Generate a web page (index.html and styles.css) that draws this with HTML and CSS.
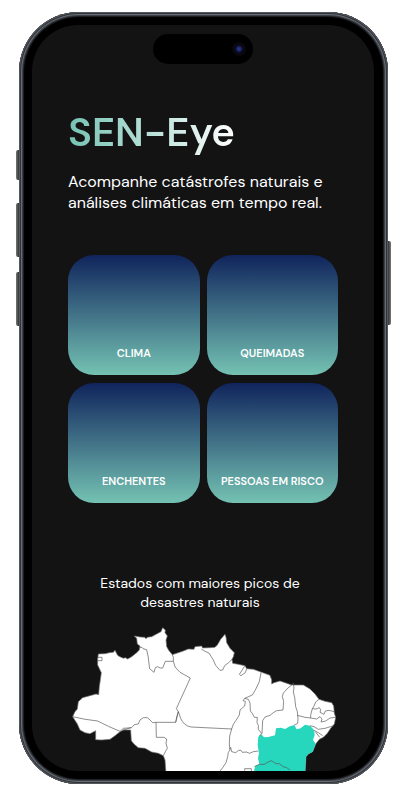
FILE: index.html
```html
<!DOCTYPE html>
<html lang="pt-BR">
<head>
<meta charset="utf-8">
<meta name="viewport" content="width=device-width, initial-scale=1">
<title>SEN-Eye</title>
<link rel="stylesheet" href="styles.css">
</head>
<body>
<div class="phone">
  <span class="key key-action"></span>
  <span class="key key-up"></span>
  <span class="key key-down"></span>
  <span class="key key-power"></span>
  <div class="screen">
    <div class="island"><span class="camera"></span></div>
    <main class="content">
      <h1 class="title">SEN-Eye</h1>
      <p class="lead">Acompanhe catástrofes naturais e<br>análises climáticas em tempo real.</p>
      <nav class="tiles">
        <a class="tile" href="#clima">CLIMA</a>
        <a class="tile" href="#queimadas">QUEIMADAS</a>
        <a class="tile" href="#enchentes">ENCHENTES</a>
        <a class="tile" href="#risco">PESSOAS EM RISCO</a>
      </nav>
      <h2 class="caption">Estados com maiores picos de<br>desastres naturais</h2>
      <svg class="map" viewBox="24 15 810 438" role="img" aria-label="Mapa do Brasil">
        <path class="land" d="M38 290L45 275 52 267 55 245 68 233 90 227 108 222 116 224 118 200 121 180 124 158 113 135 113 118 115 102 135 101 148 98 160 97 165 91 171 103 175 108 190 115 196 113 203 117 215 110 230 98 238 90 240 78 232 72 230 55 223 48 240 51 254 52 258 56 262 52 275 50 290 42 303 35 308 23 316 30 315 38 322 48 318 60 320 80 327 92 337 104 350 100 370 93 385 87 402 88 405 80 425 78 428 84 450 83 465 82 472 75 482 58 495 43 498 52 500 68 510 85 523 98 520 110 516 118 518 130 530 132 555 137 560 146 580 148 605 157 630 166 635 180 635 192 642 188 660 183 675 188 695 195 730 195 750 207 765 222 777 238 795 244 815 248 821 258 823 280 827 292 823 312 812 325 802 340 790 352 778 358 767 372 758 395 745 402 738 410 735 460 318 460 315 420 310 407 295 400 275 396 255 385 235 383 222 372 214 362 212 330 190 330 180 335 165 347 150 358 125 360 107 359 107 332 90 341 75 338 60 330 52 312Z"/>
        <path class="hot" d="M595 350L604 343 612 352 625 351 645 346 648 325 662 323 675 327 690 319 703 315 710 328 722 325 735 314 750 317 762 330 764 345 759 360 767 372 758 395 745 402 738 410 735 460 580 460 586 438 598 433 594 415 597 400 593 375Z"/>
        <g class="borders">
          <path d="M38 290Q74 299 113 303Q145 320 180 334L190 325 215 323 223 314 235 312 240 300 250 293 262 293 270 300 278 308 288 307H347L351 288 355 275 349 266 391 174 360 157Q341 142 340 124V112L337 104"/>
          <path d="M113 112H126V122H113M236 82H246L249 86 260 89Q266 112 267 132L269 146 282 157 286 143 293 140 300 144 308 144 316 124H340"/>
          <path d="M288 307L289 352H312L320 357 318 370 322 385 316 395 310 407M190 330L213 323M355 275L362 295Q371 317 393 321L516 327M347 307L355 275"/>
          <path d="M424 87L435 94 447 99 460 120 467 136 480 151 488 150 494 137 506 128 516 118M555 137L546 151 538 163 543 167 556 158 560 146"/>
          <path d="M603 158L598 185 586 210 577 225 554 235 549 242 556 244 554 258 540 270 538 285 528 301 520 313 515 327 509 348 508 372 510 390 505 397 503 410 498 428 488 443 480 453M554 235L565 238 570 249 571 273 577 280 583 292 592 292 591 308 595 316 595 328 605 341"/>
          <path d="M508 388L512 382 515 395 527 398 536 391 543 391 547 397 559 396 569 400 580 395 595 393M635 177L630 166M695 195L684 204 670 219 667 230 671 244 669 270 650 272 640 278 630 286 615 291 608 302 606 340 598 348M695 195L700 189 702 204 700 216 704 232 707 260 712 275 714 296 713 310 703 315"/>
          <path d="M777 238L767 246 762 258 757 266 752 285 752 294M757 266L768 267 778 263 782 269 780 277 792 283 796 273 807 271 823 275M712 286L735 292 752 294 770 297 780 290 786 297 783 306 797 303 810 294 827 292M750 317L762 320 775 328 795 325 818 318M762 331L775 338 788 347M766 335L779 352"/>
          <path d="M583 440L598 433 613 433 623 427 634 422 648 431 658 431 669 440 680 443 690 450M554 452V446H574V453"/>
        </g>
      </svg>
    </main>
  </div>
</div>
</body>
</html>
```
FILE: styles.css
```css
* {
  box-sizing: border-box;
}

body {
  margin: 0;
  height: 100vh;
  padding: 12px 12px 16px 19px;
  background: #fff;
  color: #fff;
  font-family: "DM Sans", Inter, "Liberation Sans", sans-serif;
}

.phone {
  position: relative;
  height: 100%;
  padding: 13px 14px 13px 13px;
  border-radius: 60px;
  background: #000;
  box-shadow:
    inset 0 0 0 1px #55585c,
    inset 0 0 0 2px #30343a,
    inset 0 0 0 3px #666b74,
    inset 0 0 0 4px #3c4046,
    inset 0 0 1px 5px #202226;
}

.key {
  position: absolute;
  left: -3px;
  width: 3px;
  border-radius: 2px 0 0 2px;
  background: linear-gradient(90deg, #777, #333);
}

.key-action {
  top: 138px;
  height: 30px;
}

.key-up {
  top: 191px;
  height: 54px;
}

.key-down {
  top: 260px;
  height: 54px;
}

.key-power {
  top: 229px;
  right: -3px;
  left: auto;
  height: 84px;
  border-radius: 0 2px 2px 0;
  background: linear-gradient(90deg, #333, #777);
}

.screen {
  height: 100%;
  padding: 9px 36px 0;
  overflow: hidden;
  border-radius: 46px;
  background: #131313;
}

.island {
  display: flex;
  align-items: center;
  justify-content: flex-end;
  width: 100px;
  height: 30px;
  margin: 0 auto;
  padding-right: 7px;
  border-radius: 15px;
  background: #000;
}

.camera {
  width: 14px;
  height: 14px;
  border-radius: 50%;
  background: radial-gradient(circle, #27357c 0 1px, #10154a 3px, #090812 4px, #07070b 7px);
}

.content {
  padding-top: 44px;
}

.title {
  width: fit-content;
  margin: 0;
  background: linear-gradient(90deg, #74c2b3, #fff);
  background-clip: text;
  -webkit-background-clip: text;
  color: transparent;
  font-size: 40px;
  font-weight: 600;
  line-height: 48px;
}

.lead {
  margin: 15px 0 0;
  font-size: 16px;
  line-height: 21px;
  white-space: nowrap;
}

.tiles {
  display: grid;
  grid-template-columns: 1fr 1fr;
  gap: 8px 7px;
  margin-top: 42px;
}

.tile {
  display: flex;
  align-items: flex-end;
  justify-content: center;
  height: 120px;
  padding-bottom: 14px;
  border-radius: 26px;
  background: linear-gradient(#10245c, #74c2b3);
  color: #fff;
  font-size: 11px;
  font-weight: 600;
  line-height: 16px;
  text-decoration: none;
  white-space: nowrap;
}

.caption {
  margin: 71px 6px 0 0;
  font-size: 14px;
  font-weight: 400;
  line-height: 19px;
  text-align: center;
}

.map {
  display: block;
  width: 100%;
  margin-top: 13px;
}

.land {
  fill: #fff;
  stroke: #777;
  stroke-width: 2;
}

.hot {
  fill: #27d7bd;
}

.borders {
  fill: none;
  stroke: #555;
  stroke-width: 2;
  stroke-linejoin: round;
}
```
